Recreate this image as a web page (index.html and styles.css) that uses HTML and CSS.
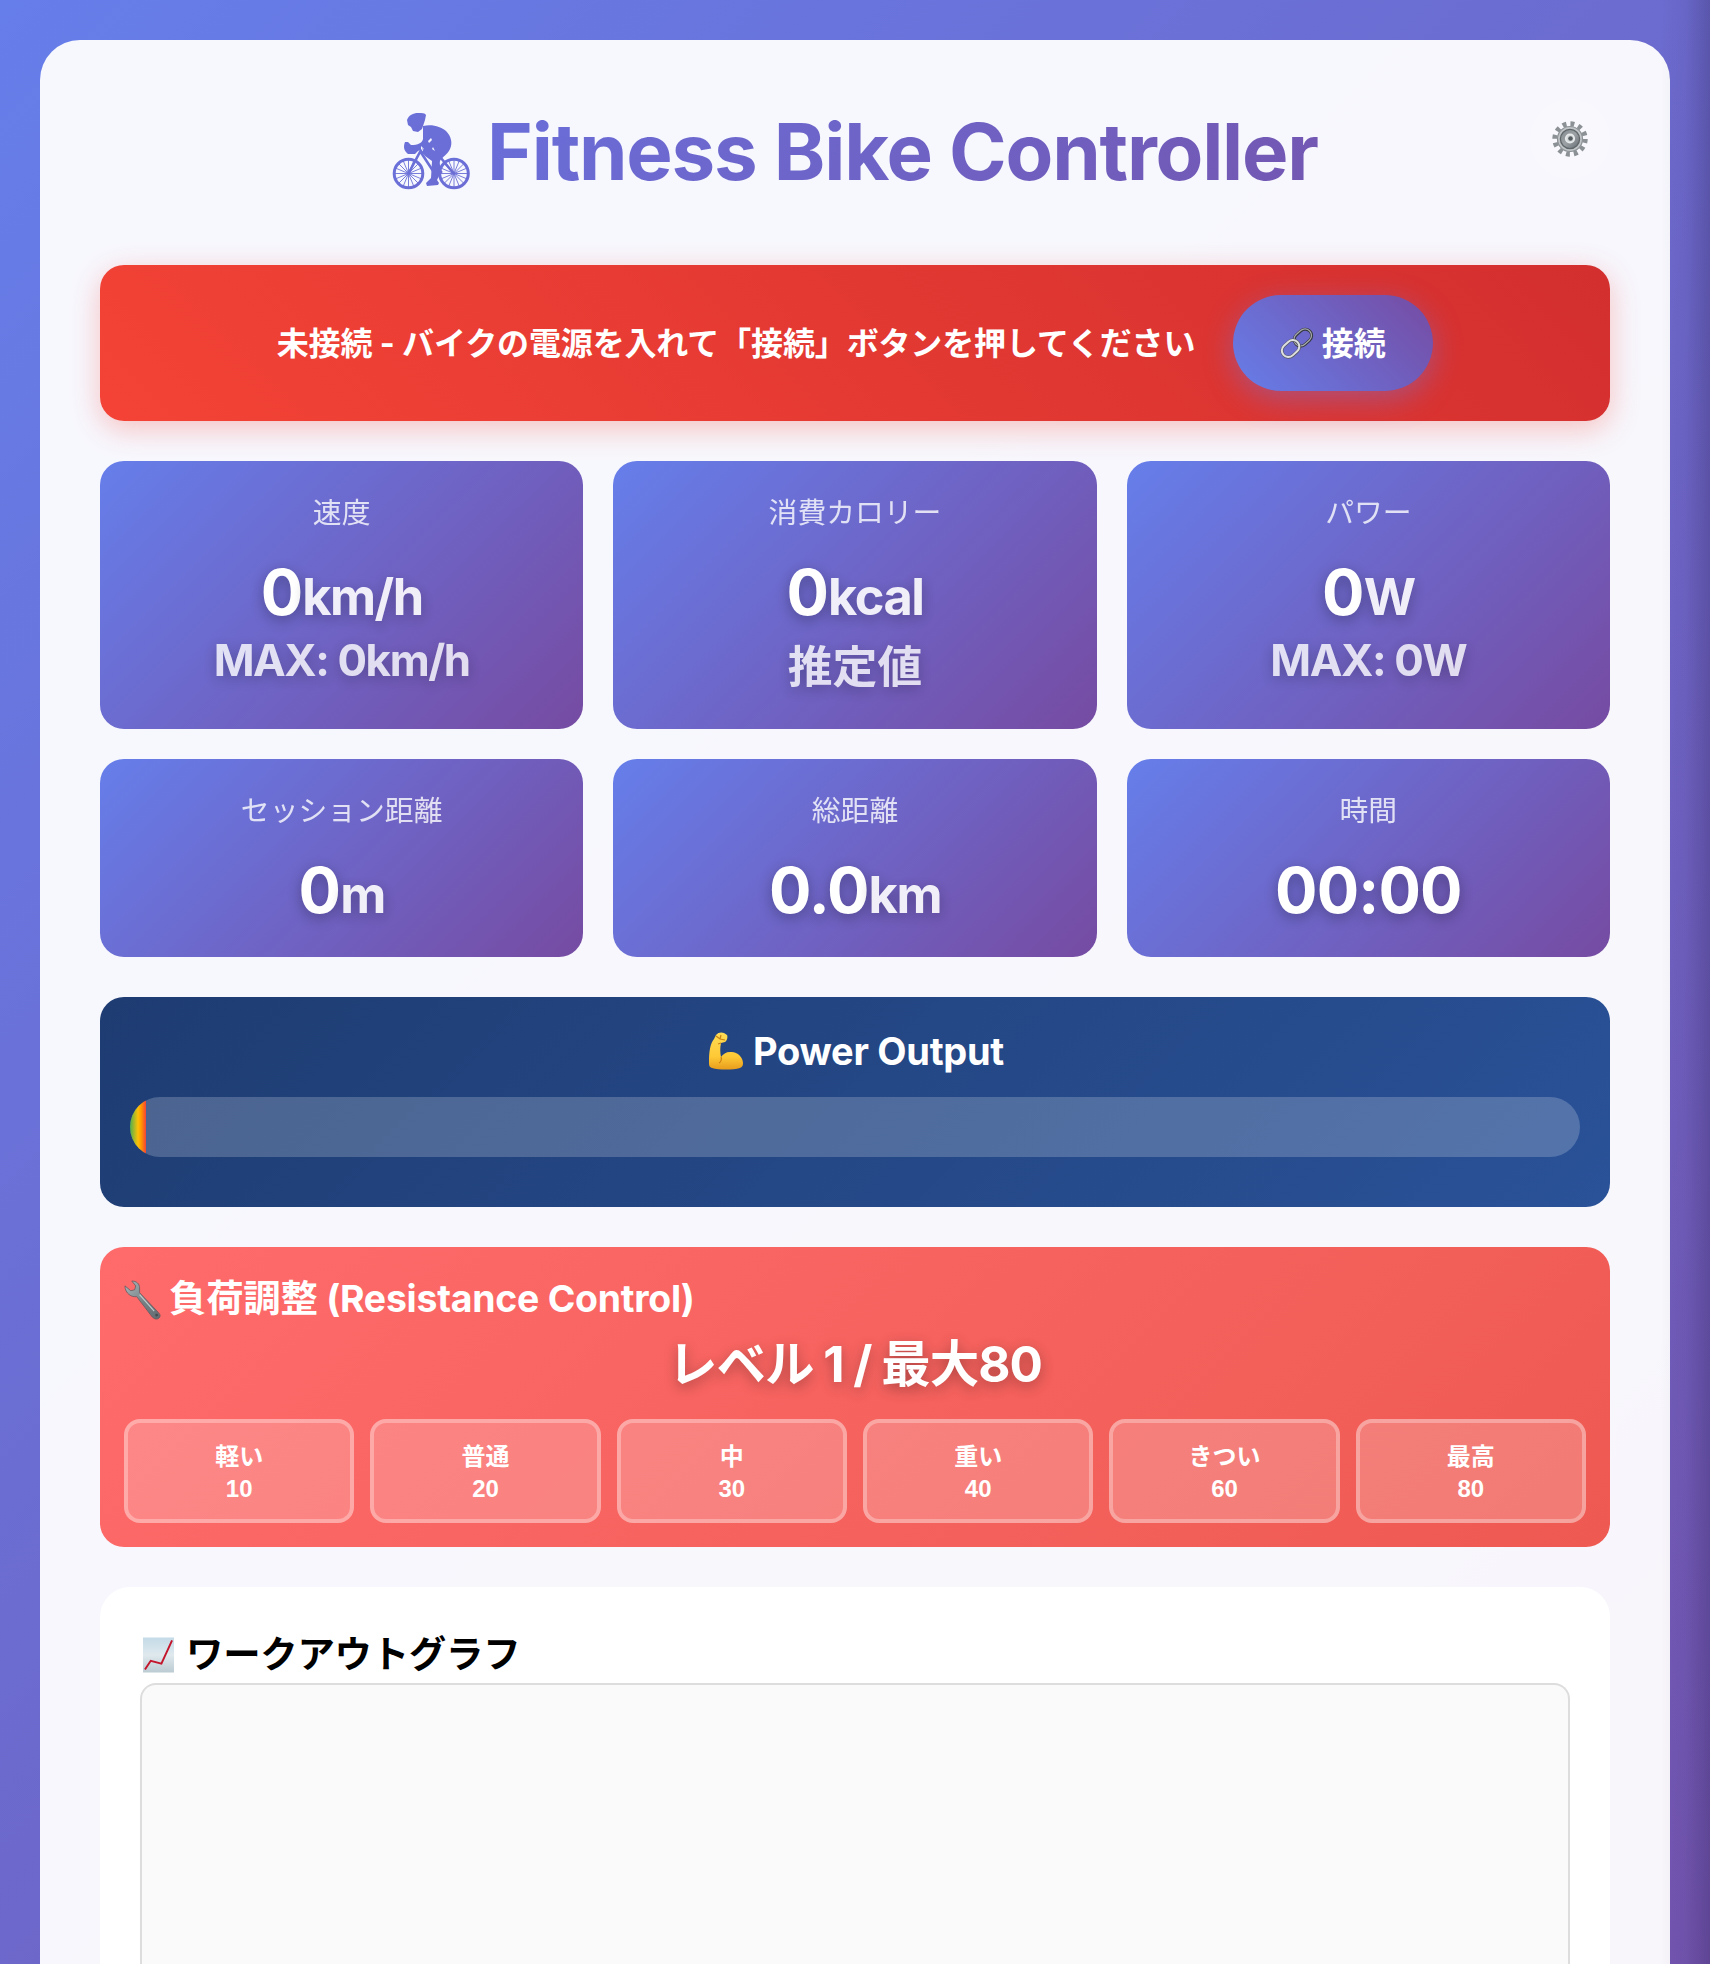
FILE: index.html
```html
<!DOCTYPE html>
<html lang="ja">
<head>
<meta charset="utf-8">
<title>Fitness Bike Controller</title>
<link rel="stylesheet" href="styles.css">
</head>
<body>
<main class="container">
  <header class="header">
    <svg class="cyclist" viewBox="0 0 78 78">
      <defs><linearGradient id="bike" x1="0" y1="0" x2="1" y2="1"><stop offset="0" stop-color="#6a71da"/><stop offset="1" stop-color="#6b6cd3"/></linearGradient></defs>
      <g fill="none" stroke="url(#bike)">
        <circle cx="16.500" cy="60.500" r="14.300" stroke-width="3"/>
        <circle cx="62" cy="60.500" r="14.300" stroke-width="3"/>
        <path stroke-width=".9" d="M16.500 47v27M3 60.500h27M7 51l19 19M26 51L7 70M11.300 48l10.400 25M21.700 48L11.300 73M4 55.300l25 10.400M4 65.700l25-10.400M62 47v27M48.500 60.500h27M52.500 51l19 19M71.500 51l-19 19M56.800 48l10.400 25M67.200 48L56.800 73M49.500 55.300l25 10.400M49.500 65.700l25-10.400"/>
        <path stroke-width="2.600" d="M16.500 60.500L29 37l-3-3M28 38l17 26M50 58l-7 6M49 45l13 16M28 39l14 2"/>
      </g>
      <g fill="url(#bike)">
        <path d="M15 7C17 2 21 0 26 0c4 0 7 0 8 2l-1 5-1 3-2 6-4 3-5-1-2-4-3-2z"/>
        <path d="M31 13c10-2 18 1 23 5 5 5 7 12 4 18-2 5-8 8-10 12-1 4 2 8 0 13l-3 6 2 3-1 2-11 1-1-3 5-5 1-17-7-5c-2-3-3-5-1-8l-6 3-3 3-7 0c-4-3-5-7-3-12l3 0 3 3c7 0 11-2 12-6z"/>
      </g>
      <path fill="#f7f8fe" d="M36 28l3-3 1 2-3 3zM29 33l2 2-2 2zM41 34l2 4-3-2z"/>
    </svg>
    <h1 class="title">Fitness Bike Controller</h1>
    <button class="settings" aria-label="設定">
      <svg class="gear" viewBox="0 0 36 36">
        <defs><linearGradient id="steel" x1="0" y1="0" x2="1" y2="1"><stop offset="0" stop-color="#858c91"/><stop offset=".5" stop-color="#9ba1a5"/><stop offset="1" stop-color="#656c71"/></linearGradient></defs>
        <circle cx="18" cy="18" r="15.200" fill="none" stroke="#8b9195" stroke-width="5" stroke-dasharray="3.900 4.058"/>
        <circle cx="18" cy="18" r="12.500" fill="#c0c4c6" stroke="#8b9195" stroke-width="1.200"/>
        <circle cx="18" cy="18" r="9.600" fill="url(#steel)" stroke="#60676b" stroke-width="1.300"/>
        <circle cx="18" cy="17.500" r="4.300" fill="#d5dadc" stroke="#e8eaeb" stroke-width="1.600"/>
        <circle cx="18.500" cy="17.500" r="2.300" fill="#555c60"/>
      </svg>
    </button>
  </header>

  <section class="status">
    <span class="status-text">未接続 - バイクの電源を入れて「接続」ボタンを押してください</span>
    <button class="connect">
      <svg class="link" viewBox="0 0 32 32">
        <g fill="none" transform="rotate(-42 16 16)">
          <rect x="14.500" y="9.500" width="19" height="13" rx="6.500" stroke="#353941" stroke-width="3"/>
          <rect x="14.500" y="9.200" width="19" height="13" rx="6.500" stroke="#a6a8ac" stroke-width="1.300"/>
          <rect x="-2" y="9.500" width="19" height="13" rx="6.500" stroke="#565a62" stroke-width="3.200"/>
          <rect x="-2" y="9.300" width="19" height="13" rx="6.500" stroke="#dedfe0" stroke-width="2"/>
        </g>
      </svg>
      <span>接続</span>
    </button>
  </section>

  <section class="stats">
    <article class="stat"><div class="label">速度</div><div class="value">0<span class="unit">km/h</span></div><div class="max">MAX: 0km/h</div></article>
    <article class="stat"><div class="label">消費カロリー</div><div class="value">0<span class="unit">kcal</span></div><div class="max max-ja">推定値</div></article>
    <article class="stat"><div class="label">パワー</div><div class="value">0<span class="unit">W</span></div><div class="max">MAX: 0W</div></article>
    <article class="stat"><div class="label">セッション距離</div><div class="value">0<span class="unit">m</span></div></article>
    <article class="stat"><div class="label">総距離</div><div class="value">0.0<span class="unit">km</span></div></article>
    <article class="stat"><div class="label">時間</div><div class="value">00:00</div></article>
  </section>

  <section class="power">
    <h2 class="power-title">
      <svg class="arm" viewBox="0 0 36 38">
        <defs><linearGradient id="skin" x1="0" y1="0" x2="0" y2="1"><stop offset="0" stop-color="#ffdc55"/><stop offset=".65" stop-color="#ffc936"/><stop offset="1" stop-color="#e79c1c"/></linearGradient></defs>
        <path fill="url(#skin)" d="M8 3c2-3 6-3 8-2l3 2c1 2 0 6-2 7l-4 1c-1 5-1 9 0 14 2-3 5-5 9-5 7-1 13 5 13 11 0 3-1 4-3 5-7 2-21 2-28 0-3-1-3-3-3-6C1 20 2 12 6 7z"/>
        <path fill="none" stroke="#c98214" stroke-width="1.200" d="M8 4l4 3 5 1M12 7l1-4M10 12l3-1M13 25c1 2 0 5-2 6"/>
      </svg>
      <span>Power Output</span>
    </h2>
    <div class="bar"><div class="fill"></div></div>
  </section>

  <section class="resistance">
    <h2 class="res-title">
      <svg class="wrench" viewBox="0 0 38 40">
        <defs><linearGradient id="iron" x1="0" y1="0" x2="1" y2="1"><stop offset="0" stop-color="#a9b9bb"/><stop offset=".55" stop-color="#758084"/><stop offset="1" stop-color="#626a70"/></linearGradient></defs>
        <path fill="url(#iron)" stroke="#67585d" stroke-width=".8" d="M1 6l6 5 4-1 1-4-4-5c5 0 8 3 8 7l0 5 19 20c2 2 3 4 1 6-2 2-5 1-7-1L13 17c-5 1-12-3-12-11z"/>
        <path fill="none" stroke="#c2cccd" stroke-width="1.200" d="M16 15l15 17"/>
        <circle cx="33.500" cy="36" r="1.400" fill="#454b50"/>
      </svg>
      <span>負荷調整 (Resistance Control)</span>
    </h2>
    <div class="level">レベル 1 / 最大80</div>
    <div class="presets">
      <button class="preset">軽い<br>10</button>
      <button class="preset">普通<br>20</button>
      <button class="preset">中<br>30</button>
      <button class="preset">重い<br>40</button>
      <button class="preset">きつい<br>60</button>
      <button class="preset">最高<br>80</button>
    </div>
  </section>

  <section class="graph">
    <h2 class="graph-title">
      <svg class="chart" viewBox="0 0 32 36">
        <defs><linearGradient id="paper" x1="0" y1="0" x2="0" y2="1"><stop offset="0" stop-color="#c4dbe7"/><stop offset=".5" stop-color="#dfe9ee"/><stop offset="1" stop-color="#bccbd2"/></linearGradient></defs>
        <path fill="url(#paper)" d="M0 0h32v36H0z"/>
        <path fill="none" stroke="#c3152b" stroke-width="2" d="M2 33l6-9 11 3L30 3"/>
      </svg>
      <span>ワークアウトグラフ</span>
    </h2>
    <div class="canvas"></div>
  </section>
</main>
<div class="edge-shade"></div>
</body>
</html>
```
FILE: styles.css
```css
* { box-sizing: border-box; margin: 0; padding: 0; }

body {
  height: 1964px;
  padding: 40px 40px 0;
  background: linear-gradient(135deg, #667eea 0%, #764ba2 100%) 0 0 / 1710px 2780px no-repeat;
  font-family: Inter, "Noto Sans CJK JP", sans-serif;
  font-weight: 700;
  color: #fff;
}

button { border: 0; font: inherit; color: inherit; }
svg { display: block; flex: none; overflow: visible; }
h1, h2 { font-weight: 700; white-space: nowrap; }

.container {
  display: flex;
  flex-direction: column;
  height: 1924px;
  padding: 60px 60px 0;
  border-radius: 40px 40px 0 0;
  background: rgba(255, 255, 255, .95);
}

.edge-shade {
  position: absolute;
  top: 0;
  right: 0;
  width: 50px;
  height: 1964px;
  background: linear-gradient(to right, rgba(30, 20, 60, 0), rgba(30, 20, 60, .05) 50%, rgba(30, 20, 60, .24));
}

/* Header */
.header {
  position: relative;
  display: flex;
  justify-content: center;
  height: 165px;
}
.cyclist { width: 78px; height: 78px; margin: 13px 17px 0 0; }
.title {
  height: 104px;
  font-size: 78px;
  line-height: 104px;
  letter-spacing: -1.200px;
  background: linear-gradient(120deg, #6a6ed9, #7357b2);
  -webkit-background-clip: text;
  background-clip: text;
  color: transparent;
}
.settings {
  position: absolute;
  top: -1px;
  right: 0;
  display: grid;
  place-items: center;
  width: 80px;
  height: 80px;
  border-radius: 50%;
  background: rgba(255, 255, 255, .2);
}
.gear { width: 36px; height: 36px; }

/* Connection status */
.status {
  display: flex;
  align-items: center;
  justify-content: center;
  gap: 38px;
  height: 156px;
  margin-bottom: 40px;
  border-radius: 24px;
  background: linear-gradient(45deg, #f44336, #d32f2f);
  box-shadow: 0 8px 30px rgba(244, 67, 54, .3);
}
.status-text {
  font-size: 32px;
  line-height: 48px;
  letter-spacing: -.130px;
}
.connect {
  display: flex;
  align-items: center;
  justify-content: center;
  gap: 9px;
  width: 200px;
  height: 96px;
  border-radius: 48px;
  background: linear-gradient(45deg, #667eea, #764ba2);
  box-shadow: 0 8px 30px rgba(102, 126, 234, .4);
  font-size: 32px;
  line-height: 48px;
}
.status-text, .connect span { padding-top: 1px; }
.link { width: 32px; height: 32px; }

/* Metric cards */
.stats {
  display: grid;
  grid-template-columns: repeat(3, 1fr);
  grid-template-rows: 268px 198px;
  gap: 30px;
  margin-bottom: 40px;
}
.stat {
  padding-top: 31px;
  border-radius: 24px;
  background: linear-gradient(135deg, #667eea, #764ba2);
  text-align: center;
}
.label { font-size: 28.800px; font-weight: 400; line-height: 42px; opacity: .8; }
.value {
  margin-top: 19px;
  font-size: 63px;
  line-height: 78px;
  letter-spacing: -.900px;
  text-shadow: 0 4px 14px rgba(0, 0, 0, .3);
}
.unit { font-size: 50.500px; letter-spacing: -1.500px; opacity: .9; }
.max {
  margin-top: -2px;
  font-size: 43.800px;
  line-height: 54px;
  letter-spacing: -1.400px;
  opacity: .8;
  text-shadow: 0 4px 14px rgba(0, 0, 0, .3);
}
.max-ja { padding-top: 6px; font-size: 44.800px; letter-spacing: 0; }

/* Power */
.power {
  height: 210px;
  margin-bottom: 40px;
  padding: 30px;
  border-radius: 24px;
  background: linear-gradient(135deg, #1e3c72, #2a5298);
}
.power-title {
  display: flex;
  align-items: center;
  justify-content: center;
  gap: 9px;
  height: 48px;
  margin-bottom: 22px;
  padding-left: 2px;
  font-size: 38px;
  letter-spacing: -.300px;
}
.arm { width: 36px; height: 38px; }
.bar {
  height: 60px;
  overflow: hidden;
  border-radius: 30px;
  background: rgba(255, 255, 255, .2);
}
.fill {
  width: 16px;
  height: 60px;
  background: linear-gradient(90deg, #4caf50, #ffc107 50%, #ff9800 70%, #f44336);
}

/* Resistance */
.resistance {
  height: 300px;
  margin-bottom: 40px;
  padding: 24px;
  border-radius: 24px;
  background: linear-gradient(135deg, #ff6b6b, #ee5a52);
}
.res-title {
  display: flex;
  align-items: center;
  gap: 8px;
  height: 56px;
  font-size: 37.400px;
  line-height: 54px;
  letter-spacing: -.250px;
}
.wrench { width: 37px; height: 39px; }
.level {
  height: 92px;
  font-size: 49.500px;
  line-height: 75px;
  letter-spacing: -1px;
  word-spacing: -1px;
  text-align: center;
  text-shadow: 0 4px 14px rgba(0, 0, 0, .3);
}
.presets { display: grid; grid-template-columns: repeat(6, 1fr); gap: 16px; }
.preset {
  height: 104px;
  padding-top: 4px;
  border: 4px solid rgba(255, 255, 255, .3);
  border-radius: 16px;
  background: rgba(255, 255, 255, .2);
  font-family: "Liberation Sans", "Noto Sans CJK JP", sans-serif;
  font-size: 24px;
  line-height: 32px;
}

/* Workout graph */
.graph {
  display: flex;
  flex: 1;
  flex-direction: column;
  padding: 40px 40px 0;
  border-radius: 30px 30px 0 0;
  background: #fff;
  color: #000;
}
.graph-title {
  display: flex;
  align-items: center;
  gap: 12px;
  height: 56px;
  padding-left: 3px;
  font-size: 37.400px;
  line-height: 52px;
  letter-spacing: -.250px;
}
.chart { width: 31px; height: 36px; }
.canvas {
  flex: 1;
  border: 2px solid #ddd;
  border-bottom: 0;
  border-radius: 16px 16px 0 0;
  background: #fafafa;
}
```
